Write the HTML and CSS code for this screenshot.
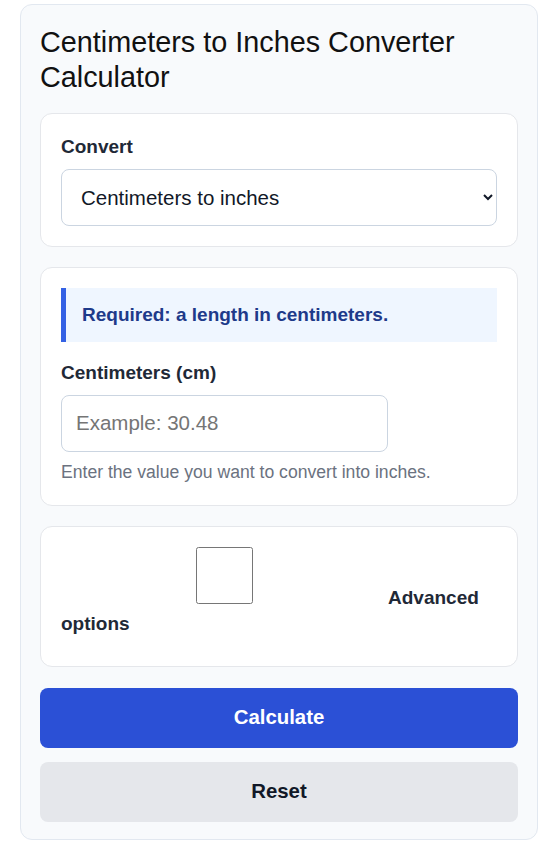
FILE: index.html
```html
<!DOCTYPE html>
<html lang="en">
<head>
  <meta charset="UTF-8">
  <meta name="viewport" content="width=device-width, initial-scale=1.0">
  <title>Centimeters to Inches Converter Calculator</title>
  <link rel="stylesheet" href="styles.css">
</head>
<body>
  <div class="calculator">
    <h1>Centimeters to Inches Converter Calculator</h1>

    <!-- Direction -->
    <div class="panel">
      <label for="mode">Convert</label>
      <select id="mode">
        <option>Centimeters to inches</option>
        <option>Inches to centimeters</option>
      </select>
    </div>

    <!-- Value -->
    <div class="panel">
      <div class="notice">Required: a length in centimeters.</div>
      <label for="cm">Centimeters (cm)</label>
      <input type="number" id="cm" placeholder="Example: 30.48">
      <p class="hint">Enter the value you want to convert into inches.</p>
    </div>

    <!-- Advanced -->
    <div class="panel">
      <label class="check"><input type="checkbox" id="advanced">Advanced options</label>
    </div>

    <button type="button" class="primary">Calculate</button>
    <button type="button" class="secondary">Reset</button>
  </div>
</body>
</html>
```

FILE: styles.css
```css
body {
  font-family: 'Liberation Sans', Arial, sans-serif;
  background-color: #fff;
  color: #111827;
  margin: 0;
}
.calculator {
  margin: 4px 14px 0 20px;
  padding: 20px 19px 17px;
  background: #f8fafc;
  border: 1px solid #e2e8f0;
  border-radius: 12px;
}
h1 {
  margin: 0 0 19px;
  font-size: 28.8px;
  font-weight: normal;
  line-height: 1.2;
  color: #111;
}
.panel {
  background: #fff;
  border: 1px solid #e5e7eb;
  border-radius: 12px;
  padding: 20px;
  margin-bottom: 20px;
}
.panel label {
  display: block;
  margin-bottom: 8px;
  font-size: 19px;
  font-weight: bold;
  line-height: 1.4;
  color: #1f2937;
}
.panel select, .panel input {
  box-sizing: border-box;
  height: 57px;
  border: 1px solid #cbd5e1;
  border-radius: 8px;
  font-family: inherit;
  font-size: 20.5px;
  color: #111827;
  background: #fff;
}
.panel select {
  display: block;
  width: 100%;
  padding: 0 10px 0 15px;
}
.panel input {
  display: block;
  width: 75%;
  padding: 0 14px;
}
.panel input::placeholder {
  color: #757575;
}
.panel .check input {
  display: inline-block;
  margin: 0;
  vertical-align: baseline;
}
.notice {
  margin-bottom: 18px;
  padding: 14px 16px;
  background: #eff6ff;
  border-left: 5px solid #3461e4;
  font-size: 19px;
  font-weight: bold;
  line-height: 1.4;
  color: #1e3a8a;
}
.hint {
  margin: 8px 0 0;
  font-size: 17.6px;
  line-height: 1.4;
  color: #6b7280;
}
.primary, .secondary {
  display: block;
  width: 100%;
  height: 60px;
  border: none;
  border-radius: 8px;
  font-family: inherit;
  font-size: 20.4px;
  font-weight: bold;
  cursor: pointer;
}
.primary {
  margin-top: 21px;
  background-color: #2b50d6;
  color: #fff;
}
.secondary {
  margin-top: 14px;
  background-color: #e5e7eb;
  color: #111827;
}
```
